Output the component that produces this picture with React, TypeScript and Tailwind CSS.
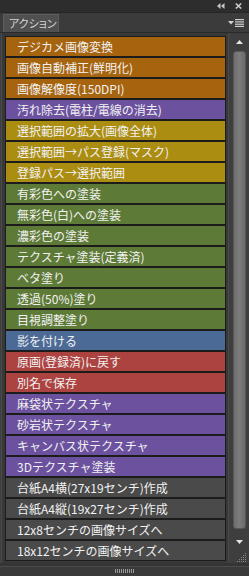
import React from "react";

type Row = { label: string; color: string };

const ORANGE = "bg-[#a6640f]";
const PURPLE = "bg-[#6b519e]";
const GOLD = "bg-[#ab8d12]";
const GREEN = "bg-[#5e7a37]";
const BLUE = "bg-[#4b6a96]";
const RED = "bg-[#ac4340]";
const GRAY = "bg-[#4a4a4a]";

const rows: Row[] = [
  { label: "デジカメ画像変換", color: ORANGE },
  { label: "画像自動補正(鮮明化)", color: ORANGE },
  { label: "画像解像度(150DPI)", color: ORANGE },
  { label: "汚れ除去(電柱/電線の消去)", color: PURPLE },
  { label: "選択範囲の拡大(画像全体)", color: GOLD },
  { label: "選択範囲→パス登録(マスク)", color: GOLD },
  { label: "登録パス→選択範囲", color: GOLD },
  { label: "有彩色への塗装", color: GREEN },
  { label: "無彩色(白)への塗装", color: GREEN },
  { label: "濃彩色の塗装", color: GREEN },
  { label: "テクスチャ塗装(定義済)", color: GREEN },
  { label: "ベタ塗り", color: GREEN },
  { label: "透過(50%)塗り", color: GREEN },
  { label: "目視調整塗り", color: GREEN },
  { label: "影を付ける", color: BLUE },
  { label: "原画(登録済)に戻す", color: RED },
  { label: "別名で保存", color: RED },
  { label: "麻袋状テクスチャ", color: PURPLE },
  { label: "砂岩状テクスチャ", color: PURPLE },
  { label: "キャンバス状テクスチャ", color: PURPLE },
  { label: "3Dテクスチャ塗装", color: PURPLE },
  { label: "台紙A4横(27x19センチ)作成", color: GRAY },
  { label: "台紙A4縦(19x27センチ)作成", color: GRAY },
  { label: "12x8センチの画像サイズへ", color: GRAY },
  { label: "18x12センチの画像サイズへ", color: GRAY },
];

export default function App() {
  return (
    <div className="w-[249px] h-[576px] bg-[#3a3a3a] flex flex-col overflow-hidden [font-family:'Noto_Sans_CJK_JP','Noto_Sans',sans-serif]">
      {/* top bar */}
      <div className="h-[13px] bg-[#2d2d2d] flex items-center justify-end pr-[7px] gap-[10px] border-b border-[#262626]">
        <svg width="8" height="6" viewBox="0 0 8 6">
          <polygon points="3.5,0 0,3 3.5,6" fill="#c8c8c8" />
          <polygon points="7.5,0 4,3 7.5,6" fill="#c8c8c8" />
        </svg>
        <svg width="7" height="6" viewBox="0 0 7 6">
          <path d="M0.8 0.5 L6.2 5.5 M6.2 0.5 L0.8 5.5" stroke="#c8c8c8" strokeWidth="1.6" />
        </svg>
      </div>
      {/* tab strip */}
      <div className="h-[19px] bg-[#3b3b3b] flex items-end">
        <div className="ml-[3px] w-[56px] h-[18px] bg-[#505050] border-t border-x border-[#5c5c5c] flex items-center pl-[5px] text-[11px] leading-none text-[#d4d4d4] whitespace-nowrap [font-feature-settings:'palt']">
          アクション
        </div>
        <div className="ml-auto mr-[5px] self-center flex items-center gap-[1px]">
          <svg width="6" height="4" viewBox="0 0 6 4">
            <polygon points="0,0 6,0 3,3.5" fill="#d0d0d0" />
          </svg>
          <svg width="9" height="8" viewBox="0 0 9 8">
            <rect x="0" y="0" width="9" height="1.2" fill="#d0d0d0" />
            <rect x="0" y="2.3" width="9" height="1.2" fill="#d0d0d0" />
            <rect x="0" y="4.6" width="9" height="1.2" fill="#d0d0d0" />
            <rect x="0" y="6.8" width="9" height="1.2" fill="#d0d0d0" />
          </svg>
        </div>
      </div>
      {/* body */}
      <div className="flex-1 flex bg-[#383838] border-t border-[#2a2a2a]">
        <div className="w-[2px] bg-[#3f3f3f] border-r border-[#4a4a4a]" />
        <div className="w-[226px] pl-[3px] pt-[3px] flex flex-col">
          {rows.map((r) => (
            <div
              key={r.label}
              className={`h-[21px] w-[221px] shrink-0 border border-[#1c1c1c] ${r.color} pl-[11px] flex items-center text-[12px] leading-none text-[#f2f2f2] whitespace-nowrap overflow-hidden`}
            >
              {r.label}
            </div>
          ))}
        </div>
        {/* scrollbar */}
        <div className="w-[1px] bg-[#4a4a4a]" />
        <div className="flex-1 bg-[#3e3e3e] flex flex-col items-center pt-[7px]">
          <svg width="7" height="4" viewBox="0 0 7 4">
            <polygon points="3.5,0 7,4 0,4" fill="#e6e6e6" />
          </svg>
          <div className="mt-[7px] w-[13px] h-[478px] rounded-[3px] bg-gradient-to-r from-[#6e6e6e] via-[#7c7c7c] to-[#6a6a6a] border border-[#585858]" />
          <svg className="mt-[11px]" width="7" height="4" viewBox="0 0 7 4">
            <polygon points="0,0 7,0 3.5,4" fill="#e6e6e6" />
          </svg>
          <svg className="mt-[9px] self-end mr-[2px]" width="10" height="9" viewBox="0 0 10 9">
            {[
              [8, 0],
              [6, 2], [8, 2],
              [4, 4], [6, 4], [8, 4],
              [2, 6], [4, 6], [6, 6], [8, 6],
              [0, 8], [2, 8], [4, 8], [6, 8], [8, 8],
            ].map(([x, y], i) => (
              <rect key={i} x={x} y={y} width="1" height="1" fill="#8a8a8a" />
            ))}
          </svg>
        </div>
      </div>
      {/* bottom bar */}
      <div className="h-[13px] bg-[#3a3a3a] flex flex-col">
        <div className="h-[3px] bg-[#353535]" />
        <div className="h-[1px] bg-[#4c4c4c]" />
        <div className="flex-1 flex items-start justify-center pt-[2px]">
          <svg width="20" height="4" viewBox="0 0 20 4">
            {Array.from({ length: 10 }).map((_, i) => (
              <rect key={i} x={i * 2} y="0" width="1" height="4" fill="#9a9a9a" />
            ))}
          </svg>
        </div>
      </div>
    </div>
  );
}
